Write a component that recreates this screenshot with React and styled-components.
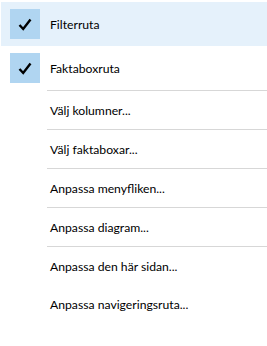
import styled, { createGlobalStyle } from 'styled-components';

const GlobalStyle = createGlobalStyle`
body {
margin: 0;
background: #fff;
font-family: Lato, 'Noto Sans', sans-serif;
}
`

const checks = [
    { label: "Filterruta", active: true },
    { label: "Faktaboxruta", active: false },
];

const items = [
    { label: "Välj kolumner...", sep: true },
    { label: "Välj faktaboxar...", sep: true },
    { label: "Anpassa menyfliken...", sep: true },
    { label: "Anpassa diagram...", sep: true },
    { label: "Anpassa den här sidan...", sep: false },
    { label: "Anpassa navigeringsruta...", sep: false },
];

export default function App() {
    return (
        <>
            <GlobalStyle />
            <Menu>
                {checks.map(c => (
                    <CheckRow key={c.label} active={c.active}>
                        <Box>
                            <svg width="14" height="13" viewBox="0 0 14 13">
                                <path d="M1.5 7 L5.2 11 L12.5 1.5" fill="none" stroke="#000" strokeWidth="2.4" />
                            </svg>
                        </Box>
                        <Label>{c.label}</Label>
                    </CheckRow>
                ))}
                <Divider />
                {items.map(i => (
                    <div key={i.label}>
                        <Item>{i.label}</Item>
                        {i.sep && <Divider />}
                    </div>
                ))}
            </Menu>
        </>
    )
}

const Menu = styled.div`
display: flex;
flex-direction: column;
width: 267px;
padding-top: 2px;
`
const CheckRow = styled.div`
display: flex;
align-items: center;
height: 44px;
margin-left: 1px;
padding-left: 9px;
background: ${props => props.active ? '#e5f1fb' : 'transparent'};
`
const Box = styled.div`
display: flex;
align-items: center;
justify-content: center;
width: 30px;
height: 30px;
background: #b0d5f1;
`
const Label = styled.span`
margin-left: 10px;
font-size: 12.2px;
color: #000;
`
const Item = styled.div`
display: flex;
align-items: center;
height: 38px;
padding-left: 50px;
font-size: 12.2px;
color: #000;
`
const Divider = styled.div`
height: 1px;
margin-left: 47px;
background: #d7d7d7;
`
